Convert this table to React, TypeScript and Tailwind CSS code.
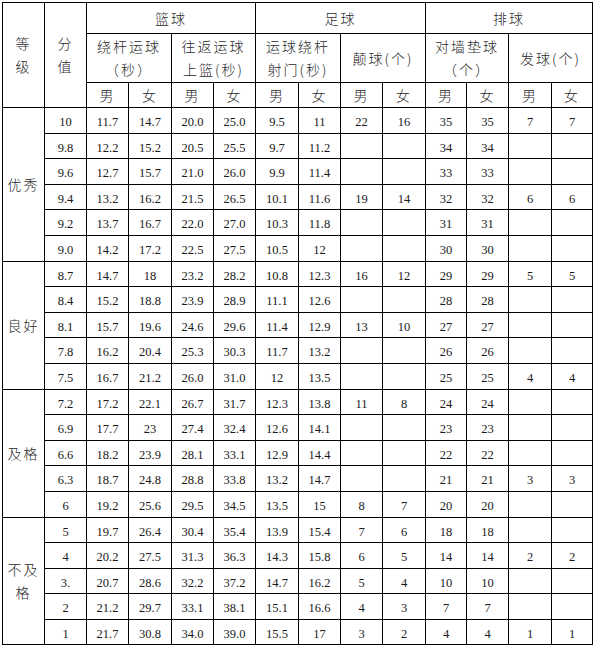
import React from "react";

// Widths of the 14 columns, measured from the reference (left edge at x=2).
const COLS = [42, 42, 42, 43, 42, 42, 43, 42, 42, 43, 41, 42, 43, 41];

type Group = { label: React.ReactNode; rows: string[][] };

// 分值, 绕杆运球 男/女, 往返运球上篮 男/女, 运球绕杆射门 男/女, 颠球 男/女, 对墙垫球 男/女, 发球 男/女
const GROUPS: Group[] = [
  {
    label: "优秀",
    rows: [
      ["10", "11.7", "14.7", "20.0", "25.0", "9.5", "11", "22", "16", "35", "35", "7", "7"],
      ["9.8", "12.2", "15.2", "20.5", "25.5", "9.7", "11.2", "", "", "34", "34", "", ""],
      ["9.6", "12.7", "15.7", "21.0", "26.0", "9.9", "11.4", "", "", "33", "33", "", ""],
      ["9.4", "13.2", "16.2", "21.5", "26.5", "10.1", "11.6", "19", "14", "32", "32", "6", "6"],
      ["9.2", "13.7", "16.7", "22.0", "27.0", "10.3", "11.8", "", "", "31", "31", "", ""],
      ["9.0", "14.2", "17.2", "22.5", "27.5", "10.5", "12", "", "", "30", "30", "", ""],
    ],
  },
  {
    label: "良好",
    rows: [
      ["8.7", "14.7", "18", "23.2", "28.2", "10.8", "12.3", "16", "12", "29", "29", "5", "5"],
      ["8.4", "15.2", "18.8", "23.9", "28.9", "11.1", "12.6", "", "", "28", "28", "", ""],
      ["8.1", "15.7", "19.6", "24.6", "29.6", "11.4", "12.9", "13", "10", "27", "27", "", ""],
      ["7.8", "16.2", "20.4", "25.3", "30.3", "11.7", "13.2", "", "", "26", "26", "", ""],
      ["7.5", "16.7", "21.2", "26.0", "31.0", "12", "13.5", "", "", "25", "25", "4", "4"],
    ],
  },
  {
    label: "及格",
    rows: [
      ["7.2", "17.2", "22.1", "26.7", "31.7", "12.3", "13.8", "11", "8", "24", "24", "", ""],
      ["6.9", "17.7", "23", "27.4", "32.4", "12.6", "14.1", "", "", "23", "23", "", ""],
      ["6.6", "18.2", "23.9", "28.1", "33.1", "12.9", "14.4", "", "", "22", "22", "", ""],
      ["6.3", "18.7", "24.8", "28.8", "33.8", "13.2", "14.7", "", "", "21", "21", "3", "3"],
      ["6", "19.2", "25.6", "29.5", "34.5", "13.5", "15", "8", "7", "20", "20", "", ""],
    ],
  },
  {
    label: (
      <>
        不及
        <br />格
      </>
    ),
    rows: [
      ["5", "19.7", "26.4", "30.4", "35.4", "13.9", "15.4", "7", "6", "18", "18", "", ""],
      ["4", "20.2", "27.5", "31.3", "36.3", "14.3", "15.8", "6", "5", "14", "14", "2", "2"],
      ["3.", "20.7", "28.6", "32.2", "37.2", "14.7", "16.2", "5", "4", "10", "10", "", ""],
      ["2", "21.2", "29.7", "33.1", "38.1", "15.1", "16.6", "4", "3", "7", "7", "", ""],
      ["1", "21.7", "30.8", "34.0", "39.0", "15.5", "17", "3", "2", "4", "4", "1", "1"],
    ],
  },
];

const cjk = "font-['Noto_Sans_CJK_SC',sans-serif] font-light text-[14px] tracking-[2px] text-[#2a2a2a]";
const th = `border border-black p-0 text-center align-middle leading-[23px] ${cjk}`;
const td = "border border-black p-0 pt-[4px] text-center align-middle font-['Liberation_Serif',serif] text-[12.5px] leading-none text-[#1a1a1a]";

export default function App() {
  return (
    <div className="min-h-screen bg-white pl-[2px] pt-[2px]">
      <table className="w-[591px] table-fixed border-collapse">
        <colgroup>
          {COLS.map((w, i) => (
            <col key={i} style={{ width: w }} />
          ))}
        </colgroup>
        <thead>
          <tr className="h-[31px]">
            <th rowSpan={3} className={th}>
              等<br />级
            </th>
            <th rowSpan={3} className={th}>
              分<br />值
            </th>
            <th colSpan={4} className={th}>篮球</th>
            <th colSpan={4} className={th}>足球</th>
            <th colSpan={4} className={th}>排球</th>
          </tr>
          <tr className="h-[49px]">
            <th colSpan={2} className={th}>
              绕杆运球
              <br />
              （秒）
            </th>
            <th colSpan={2} className={th}>
              往返运球
              <br />
              上篮(秒)
            </th>
            <th colSpan={2} className={th}>
              运球绕杆
              <br />
              射门(秒)
            </th>
            <th colSpan={2} className={th}>颠球(个)</th>
            <th colSpan={2} className={th}>
              对墙垫球
              <br />
              （个）
            </th>
            <th colSpan={2} className={th}>发球(个)</th>
          </tr>
          <tr className="h-[25px]">
            {Array.from({ length: 6 }).flatMap((_, i) => [
              <th key={`m${i}`} className={th}>男</th>,
              <th key={`f${i}`} className={th}>女</th>,
            ])}
          </tr>
        </thead>
        <tbody>
          {GROUPS.map((g) =>
            g.rows.map((r, i) => (
              <tr key={r[0]} className="h-[25.6px]">
                {i === 0 && (
                  <td rowSpan={g.rows.length} className={`${th} leading-[22px]`}>
                    {g.label}
                  </td>
                )}
                {r.map((v, j) => (
                  <td key={j} className={td}>
                    {v}
                  </td>
                ))}
              </tr>
            ))
          )}
        </tbody>
      </table>
    </div>
  );
}
